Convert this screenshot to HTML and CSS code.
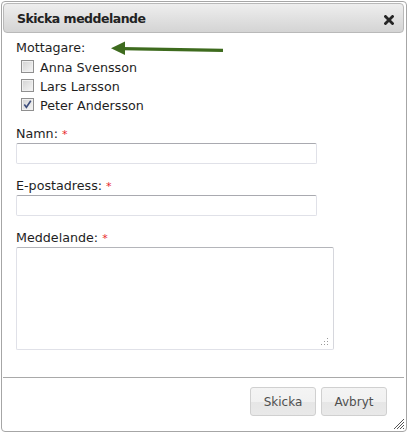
FILE: index.html
```html
<!DOCTYPE html>
<html lang="sv">
<head>
<meta charset="utf-8">
<title>Skicka meddelande</title>
<link rel="stylesheet" href="styles.css">
</head>
<body>
<div class="dialog">
  <div class="titlebar">
    <span class="title">Skicka meddelande</span>
    <svg class="close" width="10" height="10" viewBox="0 0 10 10" aria-label="Stäng">
      <path d="M1.5 1.5 L8.5 8.5 M8.5 1.5 L1.5 8.5" stroke="#262626" stroke-width="2.8" stroke-linecap="square"/>
    </svg>
  </div>

  <div class="content">
    <div class="label">Mottagare:</div>
    <div class="recipients">
      <div class="check"><span class="box"></span><span class="name">Anna Svensson</span></div>
      <div class="check"><span class="box"></span><span class="name">Lars Larsson</span></div>
      <div class="check"><span class="box checked"><svg width="11" height="11" viewBox="0 0 11 11"><path d="M2.3 5.6 L4.4 8.3 L8.8 1.8" fill="none" stroke="#3d4d7c" stroke-width="1.6"/></svg></span><span class="name">Peter Andersson</span></div>
    </div>

    <div class="field first">
      <div class="flabel">Namn: <span class="req">*</span></div>
      <div class="input short"></div>
    </div>
    <div class="field">
      <div class="flabel">E-postadress: <span class="req">*</span></div>
      <div class="input short"></div>
    </div>
    <div class="field">
      <div class="flabel">Meddelande: <span class="req">*</span></div>
      <div class="input area">
        <svg class="tgrip" width="8" height="8" viewBox="0 0 8 8">
          <rect x="6" y="0" width="1" height="1" fill="#9a9a9a"/>
          <rect x="6" y="3" width="1" height="1" fill="#9a9a9a"/>
          <rect x="3" y="3" width="1" height="1" fill="#9a9a9a"/>
          <rect x="6" y="6" width="1" height="1" fill="#9a9a9a"/>
          <rect x="3" y="6" width="1" height="1" fill="#9a9a9a"/>
          <rect x="0" y="6" width="1" height="1" fill="#9a9a9a"/>
        </svg>
      </div>
    </div>
  </div>

  <div class="footer">
    <div class="btn">Skicka</div>
    <div class="btn">Avbryt</div>
  </div>

  <svg class="arrow" width="116" height="18" viewBox="0 0 116 18">
    <path d="M13 8.6 L114 10.4" stroke="#3e6b1e" stroke-width="3.4" fill="none"/>
    <polygon points="2,8.3 16,1.6 16,15" fill="#3e6b1e"/>
  </svg>

  <svg class="grip" width="12" height="12" viewBox="0 0 12 12">
    <path d="M11 1 L1 11 M11 4 L4 11 M11 7 L7 11 M11 10 L10 11" stroke="#555" stroke-width="1"/>
  </svg>
</div>
</body>
</html>
```

FILE: styles.css
```css
html, body {
  margin: 0;
  padding: 0;
  background: #ffffff;
}

body {
  font-family: "DejaVu Sans", Verdana, sans-serif;
  color: #1e1e1e;
}

.dialog {
  position: relative;
  box-sizing: border-box;
  margin: 1px 0 0 1px;
  width: 406px;
  height: 431px;
  border: 1px solid #a6a6a6;
  border-radius: 4px;
  padding: 1px 2px 1px 1px;
  background: #ffffff;
  display: flex;
  flex-direction: column;
}

.titlebar {
  box-sizing: border-box;
  height: 30px;
  border: 1px solid #b9b9b9;
  border-radius: 4px;
  background: linear-gradient(#eeeeee, #d4d4d4);
  display: flex;
  align-items: center;
  justify-content: space-between;
  padding: 0 9px 0 13px;
}

.title {
  font-weight: bold;
  font-size: 12.5px;
  letter-spacing: -0.5px;
  color: #222;
  margin-top: 1px;
}

.close {
  display: block;
  margin-top: 3px;
}

.content {
  padding: 7px 13px 27px 13px;
  font-size: 12.7px;
}

.label {
  line-height: 15px;
}

.recipients {
  margin-top: 3px;
  padding-left: 5px;
}

.check {
  display: flex;
  align-items: flex-start;
  height: 19px;
}

.box {
  box-sizing: border-box;
  width: 13px;
  height: 13px;
  margin-top: 2px;
  border: 1px solid #8f8f8f;
  background: linear-gradient(135deg, #d2d2d2, #f6f6f6);
  box-shadow: inset 0 0 0 1px #f0f0f0;
  position: relative;
}

.box svg {
  position: absolute;
  left: 0;
  top: 0;
}

.name {
  margin-left: 6px;
  line-height: 19px;
}

.field {
  margin-top: 14px;
}

.field.first {
  margin-top: 11px;
}

.flabel {
  height: 16px;
  line-height: 16px;
}

.req {
  color: #e8262b;
  font-size: 11px;
  line-height: 1;
}

.input {
  box-sizing: border-box;
  margin-top: 1px;
  border: 1px solid #e0e1e8;
  border-top-color: #a9aab0;
  border-radius: 2px;
  background: #fff;
}

.input.short {
  width: 301px;
  height: 21px;
}

.input.area {
  position: relative;
  width: 318px;
  height: 103px;
  border-top-color: #b4b5ba;
  border-right-color: #d6d7dd;
}

.tgrip {
  position: absolute;
  right: 4px;
  bottom: 3px;
}

.footer {
  border-top: 1px solid #a9a9a9;
  display: flex;
  justify-content: flex-end;
  gap: 5px;
  padding: 9px 17px 0 0;
}

.btn {
  box-sizing: border-box;
  width: 66px;
  height: 29px;
  border: 1px solid #d0d0d0;
  border-radius: 3px;
  background: linear-gradient(#f4f4f4 0%, #f1f1f1 50%, #e6e6e6 51%, #e9e9e9 100%);
  color: #4f4f4f;
  font-size: 12px;
  display: flex;
  align-items: center;
  justify-content: center;
  padding-top: 1px;
}

.arrow {
  position: absolute;
  left: 107px;
  top: 38px;
}

.grip {
  position: absolute;
  right: 1px;
  bottom: 1px;
}
```
